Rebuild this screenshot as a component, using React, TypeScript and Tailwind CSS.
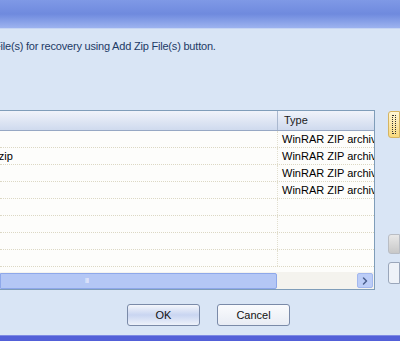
import { ChevronRight } from "lucide-react";

const rows = [
  { name: "", type: "WinRAR ZIP archive" },
  { name: "Backup.zip", type: "WinRAR ZIP archive" },
  { name: "", type: "WinRAR ZIP archive" },
  { name: "", type: "WinRAR ZIP archive" },
  { name: "", type: "" },
  { name: "", type: "" },
  { name: "", type: "" },
  { name: "", type: "" },
];

export default function App() {
  return (
    <div
      className="w-[400px] h-[341px] overflow-hidden flex flex-col bg-[#d9e5f5] text-[11px] text-black"
      style={{ fontFamily: '"Liberation Sans", Arial, sans-serif' }}
    >
      {/* header band */}
      <div className="h-[29px] shrink-0 bg-gradient-to-b from-[#7f99e6] via-[#6f8ade] to-[#9db3ef] border-b border-[#c6d5f3]" />

      {/* instruction */}
      <div className="h-[81px] shrink-0 pt-[11px] overflow-hidden">
        <p className="-ml-[6px] whitespace-nowrap text-[#1d3a66] leading-[13px] tracking-[-0.2px]">
          File(s) for recovery using Add Zip File(s) button.
        </p>
      </div>

      <div className="flex gap-[13px] h-[180px] shrink-0">
        {/* list */}
        <div className="w-[376px] -ml-px shrink-0 flex flex-col border border-[#7f9db9] bg-[#fdfdfb]">
          <div className="flex h-[20px] shrink-0 bg-gradient-to-b from-[#f0f3fa] to-[#cfdaee] border-b border-[#97a8c4]">
            <div className="w-[278px] border-r border-[#aab8cf]" />
            <div className="flex-1 pl-[6px] flex items-center text-[#1b1b1b]">Type</div>
          </div>
          <div className="flex-1 flex flex-col overflow-hidden">
            {rows.map((r, i) => (
              <div key={i} className="flex h-[17px] shrink-0 border-b border-dotted border-[#dcd8c4]">
                <div className="w-[278px] border-r border-dotted border-[#e2dfcf] overflow-hidden whitespace-nowrap flex items-center">
                  {r.name && <span className="-ml-[41px]">{r.name}</span>}
                </div>
                <div className="flex-1 overflow-hidden whitespace-nowrap pl-[4px] flex items-center">
                  {r.type}
                </div>
              </div>
            ))}
          </div>
          {/* horizontal scrollbar */}
          <div className="h-[17px] shrink-0 flex items-center bg-[#f4f3ee] pr-[1px]">
            <div className="w-[277px] h-[16px] bg-[#b4c7f5] border border-[#8ea8ea] rounded-r-[2px] flex items-center justify-center">
              <span className="-ml-[104px] text-[8px] leading-none text-[#e8eefc] tracking-[-1px]">III</span>
            </div>
            <div className="flex-1" />
            <div className="w-[16px] h-[15px] bg-[#bccdf7] border border-[#a3b8ee] rounded-[2px] flex items-center justify-center">
              <ChevronRight size={12} strokeWidth={3} className="text-[#4b5f8c]" />
            </div>
          </div>
        </div>

        {/* right side buttons */}
        <div className="flex-1 flex flex-col">
          <div className="h-[27px] mt-[1px] bg-gradient-to-b from-[#fff6d4] to-[#f8d97c] border border-[#d6b460] rounded-l-[3px] p-[3px]">
            <div className="h-full border border-dotted border-[#333]" />
          </div>
          <div className="h-[20px] mt-[96px] bg-gradient-to-b from-[#e8e8e8] to-[#c8c8c8] border border-[#b9bdc4] rounded-l-[3px]" />
          <div className="h-[22px] mt-[8px] bg-[#eef2f8] border border-[#9aa6ba] rounded-l-[3px]" />
        </div>
      </div>

      {/* footer buttons */}
      <div className="flex-1 flex items-start pt-[14px] pl-[127px] gap-[17px]">
        <button className="w-[73px] h-[22px] rounded-[3px] border border-[#7a8aa8] bg-gradient-to-b from-[#f4f6fb] via-[#c9d5f1] to-[#eef2fa] text-[#111] leading-none">
          OK
        </button>
        <button className="w-[73px] h-[22px] rounded-[3px] border border-[#7a8aa8] bg-gradient-to-b from-[#fafbfd] to-[#e8ecf4] text-[#111] leading-none">
          Cancel
        </button>
      </div>

      <div className="h-[6px] shrink-0 bg-[#5260d8] border-t border-[#7d8ae4]" />
    </div>
  );
}
